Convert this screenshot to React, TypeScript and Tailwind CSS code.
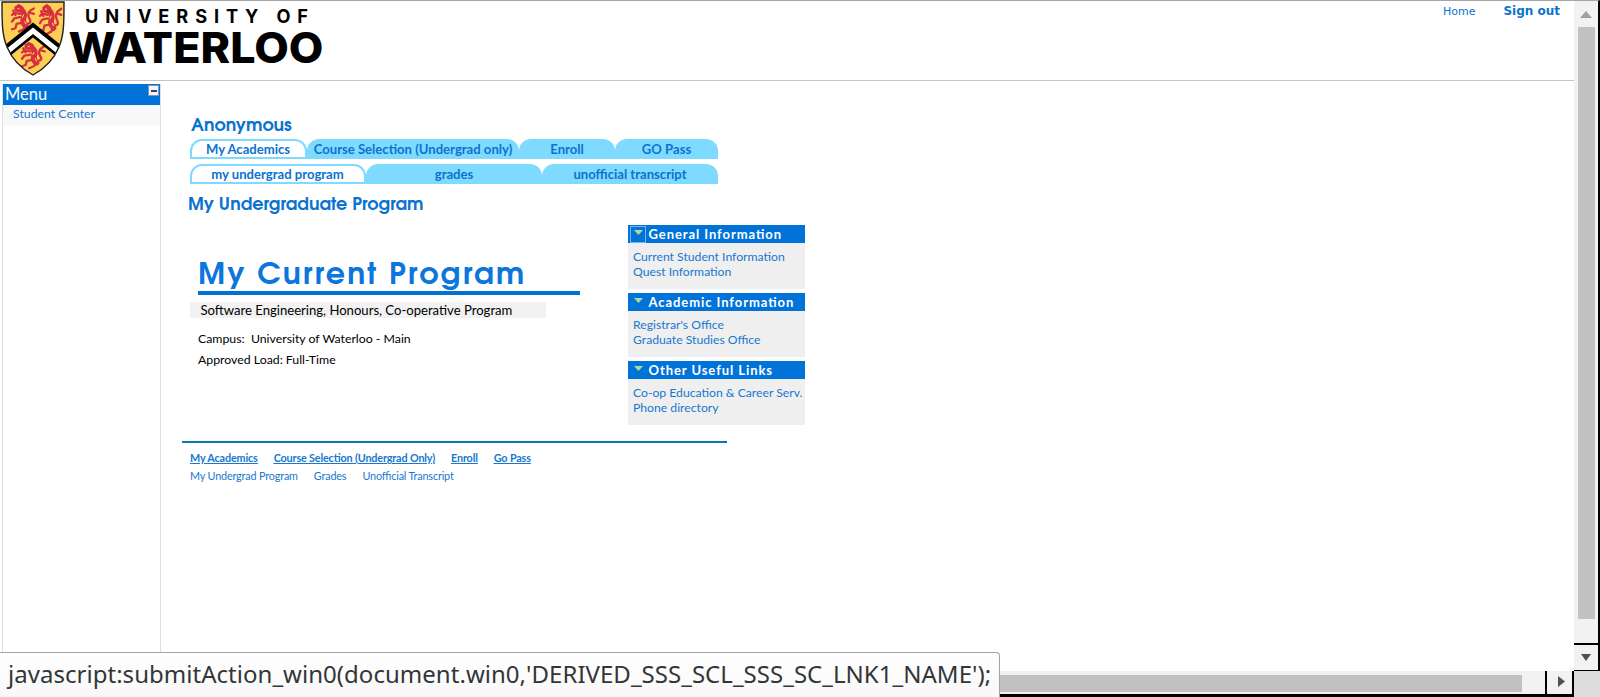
import type { ReactNode } from "react";

const GOTHIC = "font-['URW_Gothic','TeX_Gyre_Adventor','Inter',sans-serif] font-bold [font-variant-ligatures:none]";

function Lion({ transform }: { transform: string }) {
  return (
    <g transform={transform} fill="none" stroke="#d63040" strokeLinecap="round" strokeLinejoin="round">
      <path d="M3 3 L6 1 L9 3 L8 7 L3 6 Z" fill="#d63040" strokeWidth="1.8" />
      <path d="M8 5 Q12 9 10 13 Q9 17 12 20" strokeWidth="5" />
      <path d="M7 9 L2 8 L0 10 M7 12 L2 13 L0 16 M9 17 L4 18 L3 22 L0 23 M12 19 L10 23 L6 25 M3 10 L1 6" strokeWidth="2" />
      <path d="M12 18 Q18 18 15 13 Q13 9 16 6 L19 4 M16 8 L19 9" strokeWidth="2" />
      <path d="M5 4 L6 4.500 M10 10 L9 12 M11 16 L12 18" stroke="#ffd54f" strokeWidth="0.9" />
    </g>
  );
}

function Logo() {
  return (
    <svg width="330" height="79" viewBox="0 0 330 79" className="block">
      <defs>
        <clipPath id="shield">
          <path d="M2 1 H64 C64 22 64 34 59 46 C54 58 44 68 33 74 C22 68 12 58 7 46 C2 34 2 22 2 1 Z" />
        </clipPath>
      </defs>
      <g clipPath="url(#shield)">
        <rect width="66" height="77" fill="#fdcf55" />
        <Lion transform="translate(12 3) scale(1.15 1.1)" />
        <Lion transform="translate(40 3) scale(1.12 1.2)" />
        <Lion transform="translate(22 41) scale(1.2 1.05)" />
        <path d="M0 48 L33 21.500 L66 48 V63 L33 36.500 L0 63 Z" fill="#000" />
        <path d="M0 53 L33 26.500 L66 53 V60 L33 33 L0 60 Z" fill="#fff" />
      </g>
      <path d="M2 1 H64 C64 22 64 34 59 46 C54 58 44 68 33 74 C22 68 12 58 7 46 C2 34 2 22 2 1 Z" fill="none" stroke="#222" strokeWidth="1.4" />
      <text x="85" y="22.300" textLength="223" lengthAdjust="spacing" className="font-['Inter',sans-serif] text-[18.200px] font-bold">UNIVERSITY OF</text>
      <text x="68.500" y="62" textLength="255" lengthAdjust="spacingAndGlyphs" className="font-['Inter',sans-serif] text-[42px] font-extrabold">WATERLOO</text>
    </svg>
  );
}

function Tab({ children, active, className }: { children: ReactNode; active?: boolean; className: string }) {
  return (
    <div
      className={`flex h-5 items-center justify-center rounded-t-[12px] whitespace-nowrap text-[13.100px] font-bold leading-5 text-[#0b73cf] ${
        active ? "border-2 border-[#7fdaff] bg-white pr-px" : "bg-[#7fdaff]"
      } ${className}`}
    >
      {children}
    </div>
  );
}

function Panel({ title, links, focused }: { title: string; links: string[]; focused?: boolean }) {
  return (
    <section className="h-[64px] bg-[#efefef]">
      <h3 className="flex h-[18px] items-center bg-[#0073d9] pl-[2px] text-[13px] font-bold leading-[18px] tracking-[0.93px] whitespace-nowrap text-white [font-feature-settings:'liga']">
        <span className={`mr-[2.500px] flex h-[17px] w-4 justify-center border pt-[3px] ${focused ? "border-[#7ab4e8]" : "border-transparent"}`}>
          <svg width="9" height="5" viewBox="0 0 9 5">
            <path d="M0 0 H9 L4.500 5 Z" fill="#a9dd9b" />
          </svg>
        </span>
        {title}
      </h3>
      <div className="pt-[6px] pl-[5px] text-[12.200px] leading-[15px] whitespace-nowrap text-[#1878cf]">
        {links.map((l) => (
          <a key={l} className="block">
            {l}
          </a>
        ))}
      </div>
    </section>
  );
}

export default function App() {
  return (
    <div className="relative grid h-[697px] w-[1600px] grid-cols-[1574px_26px] grid-rows-[671px_26px] overflow-hidden bg-white font-['Lato',sans-serif]">
      <main className="flex flex-col overflow-hidden">
        <header className="flex h-[81px] shrink-0 justify-between border-t border-b border-t-[#a6a6a6] border-b-[#c6c6c6]">
          <Logo />
          <nav className="flex gap-[28px] pt-[2px] pr-[14px] font-['DejaVu_Sans',sans-serif] leading-4 text-[#0b73cf]">
            <a className="pt-px text-[11px]">Home</a>
            <a className="text-[12px] font-bold">Sign out</a>
          </nav>
        </header>

        <div className="flex flex-1">
          <aside className="mt-[3px] ml-[2px] w-[159px] border-x border-[#dedede]">
            <div className="flex h-[21px] justify-between bg-[#0073d9] pl-[2px] text-[16.500px] leading-[20px] text-white">
              Menu
              <span className="mt-[1px] mr-[1px] flex h-[11px] w-[11px] items-center justify-center border border-[#8d93a8] bg-[#f4f6fb]">
                <span className="h-[2px] w-[6px] bg-[#34406b]" />
              </span>
            </div>
            <div className="h-[20px] bg-[#f8f8f8] pl-[10px] text-[12.300px] leading-[18px] text-[#1878cf]">Student Center</div>
          </aside>

          <div className="flex-1 pl-[21px]">
            <h1 className={`${GOTHIC} pt-[35px] pl-[9px] text-[17.500px] leading-[20px] text-[#0b73cf]`}>Anonymous</h1>
            <div className="mt-[3px] ml-[8px] flex w-[528px]">
              <Tab active className="w-[117px]">My Academics</Tab>
              <Tab className="w-[212px]">Course Selection (Undergrad only)</Tab>
              <Tab className="w-[96px]">Enroll</Tab>
              <Tab className="w-[103px]">GO Pass</Tab>
            </div>
            <div className="mt-[5px] ml-[8px] flex w-[528px]">
              <Tab active className="w-[176px]">my undergrad program</Tab>
              <Tab className="w-[176px]">grades</Tab>
              <Tab className="w-[176px]">unofficial transcript</Tab>
            </div>
            <div className="flex">
              <div className="w-[446px]">
                <h2 className={`${GOTHIC} pt-[11px] pl-[6px] text-[17.500px] leading-[20px] text-[#0b73cf]`}>My Undergraduate Program</h2>
                <div className="mt-[34px] ml-[16px] h-[46px] w-[382px] border-b-4 border-[#0073d2]">
                  <h2 className={`${GOTHIC} pt-[3px] text-[30px] leading-[48px] tracking-[2.150px] whitespace-nowrap text-[#0b76dc]`}>My Current Program</h2>
                </div>
                <p className="mt-[7px] ml-[8px] h-[16px] w-[356px] bg-[#f1f2f1] pl-[10.500px] text-[13.100px] leading-[16px] whitespace-nowrap text-black">
                  Software Engineering, Honours, Co-operative Program
                </p>
                <div className="mt-[10px] ml-[16px] text-[12.300px] leading-[21px] whitespace-pre text-black">
                  <div>Campus:{"  "}University of Waterloo - Main</div>
                  <div>Approved Load: Full-Time</div>
                </div>
              </div>
              <div className="mt-[41px] flex w-[177px] flex-col gap-[4px]">
                <Panel focused title="General Information" links={["Current Student Information", "Quest Information"]} />
                <Panel title="Academic Information" links={["Registrar's Office", "Graduate Studies Office"]} />
                <Panel title="Other Useful Links" links={["Co-op Education & Career Serv.", "Phone directory"]} />
              </div>
            </div>
            <footer className="mt-[16px] w-[545px] border-t-2 border-[#0f75b5] pt-[6px] pl-[8px] text-[10.800px] leading-[18px] tracking-[-0.150px] whitespace-nowrap text-[#1878cf] [font-feature-settings:'liga']">
              <div className="flex gap-[16px] font-bold underline">
                <a>My Academics</a>
                <a>Course Selection (Undergrad Only)</a>
                <a>Enroll</a>
                <a>Go Pass</a>
              </div>
              <div className="flex gap-[16px]">
                <a>My Undergrad Program</a>
                <a>Grades</a>
                <a>Unofficial Transcript</a>
              </div>
            </footer>
          </div>
        </div>
      </main>

      <div className="flex flex-col border-t border-r-2 border-t-[#a6a6a6] border-r-black bg-[#f2f2f2]">
        <div className="flex h-[26px] items-center justify-center pr-px">
          <svg width="12" height="7" viewBox="0 0 12 7">
            <path d="M6 0 L12 7 H0 Z" fill="#a0a0a0" />
          </svg>
        </div>
        <div className="ml-[4px] h-[592px] w-[17px] bg-[#c1c1c1]" />
        <div className="mt-[24px] flex h-[28px] items-center justify-center border-t-2 border-b border-black pr-px">
          <svg width="10" height="7" viewBox="0 0 10 7">
            <path d="M0 0 H10 L5 7 Z" fill="#505050" />
          </svg>
        </div>
      </div>

      <div className="flex justify-end border-b-[3px] border-black bg-[#f2f2f2]">
        <div className="mt-[4px] mr-[23px] h-[17px] w-[700px] bg-[#c1c1c1]" />
        <div className="flex w-[29px] items-center justify-center border-x-2 border-black pb-[2px] pl-[3px]">
          <svg width="7" height="11" viewBox="0 0 7 11">
            <path d="M0 0 V11 L7 5.500 Z" fill="#505050" />
          </svg>
        </div>
      </div>
      <div className="bg-[#dcdcdc]" />

      <div className="absolute bottom-0 left-0 h-[45px] w-[1000px] rounded-tr-[4px] border-t border-r border-[#a3a3a3] bg-linear-to-b from-white to-[#f8f8f8] pl-[8px] font-['Noto_Sans',sans-serif] text-[24px] leading-[41px] tracking-[0.030px] whitespace-nowrap text-[#333638]">
        javascript:submitAction_win0(document.win0,'DERIVED_SSS_SCL_SSS_SC_LNK1_NAME');
      </div>
    </div>
  );
}
